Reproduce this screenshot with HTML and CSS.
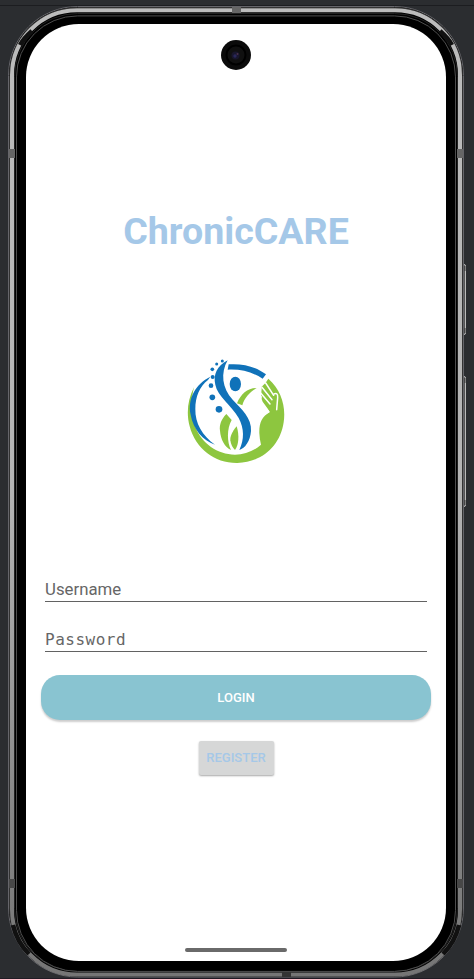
FILE: index.html
```html
<!DOCTYPE html>
<html lang="en">
<head>
<meta charset="utf-8">
<title>ChronicCARE</title>
<link rel="stylesheet" href="styles.css">
</head>
<body>
<div class="stage">
  <svg class="frame" viewBox="0 0 474 979" aria-hidden="true">
    <defs>
      <linearGradient id="metal" x1="0" y1="0" x2="0" y2="1">
        <stop offset="0" stop-color="#bcbcbc"/>
        <stop offset=".5" stop-color="#b4b4b4"/>
        <stop offset=".85" stop-color="#858585"/>
        <stop offset="1" stop-color="#757575"/>
      </linearGradient>
    </defs>
    <path d="M0 5.5H474" stroke="#1c1d20"/>
    <path d="M0 978.5H474" stroke="#201b24"/>
    <g fill="#555" stroke="#bbb">
      <rect x="461.5" y="264.5" width="4" height="70" rx="1.5"/>
      <rect x="461.5" y="376.5" width="4" height="130" rx="1.5"/>
      <path d="M464.5 266v5M464.5 328v5M464.5 378v5M464.5 500v5" stroke="#444" stroke-width="2"/>
    </g>
    <rect x="8.5" y="6.5" width="455" height="970.5" rx="69" fill="#000" stroke="#65656a"/>
    <rect x="9.5" y="7.5" width="453" height="968.5" rx="68" fill="none" stroke="#333"/>
    <rect x="12" y="10.2" width="448" height="964.3" rx="65" fill="none" stroke="url(#metal)" stroke-width="4"/>
    <rect x="14.5" y="13.5" width="443" height="958" rx="63" fill="none" stroke="#222"/>
    <rect x="16.5" y="15.9" width="439" height="955.5" rx="61" fill="none" stroke="#4d4d4d"/>
    <g fill="none" stroke="#111" stroke-width="4.5">
      <path d="M20 45Q24 38 32 31"/>
      <path d="M452 45Q448 38 440 31"/>
      <path d="M13 925Q17 942 29 954"/>
      <path d="M459 925Q455 942 443 954"/>
    </g>
    <g fill="#666">
      <rect x="232" y="7" width="9" height="6"/>
      <rect x="9" y="149" width="6" height="9"/>
      <rect x="457" y="149" width="6" height="9"/>
      <rect x="9" y="879" width="6" height="9" fill="#484848"/>
      <rect x="457" y="879" width="6" height="9" fill="#484848"/>
      <rect x="282" y="972" width="9" height="5" fill="#333"/>
    </g>
  </svg>
  <main class="screen">
    <svg class="camera" viewBox="0 0 30 30" aria-hidden="true">
      <circle cx="15" cy="15" r="15" fill="#0b0b0b"/>
      <circle cx="15" cy="15" r="9.5" fill="#101010" stroke="#000" stroke-width="2"/>
      <circle cx="14.5" cy="15.5" r="4" fill="#18162c"/>
      <circle cx="14" cy="16" r="1.7" fill="#29275a"/>
      <circle cx="16.5" cy="14" r="1" fill="#4b3048"/>
    </svg>
    <h1 class="title">ChronicCARE</h1>
    <svg class="logo" viewBox="0 0 336 348" role="img" aria-label="ChronicCARE logo">
      <g fill="#8dc63f">
        <path d="M42 106C22 145 19 186 29 223C47 292 105 334 172 333C247 331 301 281 311 211C318 163 304 115 265 80L257 92L245 104L243 130L268 180C246 194 237 213 238 244Q239 264 243 278C221 298 194 307 165 308C112 307 66 275 46 225C33 188 32 145 42 106Z"/>
        <path d="M230 108C203 108 182 126 171 154L187 160C193 138 209 120 230 108Z"/>
        <path d="M139 186C123 203 118 219 120 236C122 262 134 285 153 294C141 270 140 230 155 204Z"/>
        <path d="M170 223C156 240 150 254 151 265Q153 282 165 294C177 278 178 249 170 223Z"/>
      </g>
      <path d="M236 101L244 108L243 130L270 180L255 190L234 145Z" fill="#fff"/>
      <path d="M246 132Q243 141 248 149L271 181L290 172L272 159L254 137Q249 130 246 132Z" fill="#8dc63f"/>
      <g fill="none" stroke="#fff" stroke-width="4.5" stroke-linecap="round">
        <path d="M242 123L270 156"/>
        <path d="M246 106L276 143"/>
        <path d="M257 93L281 130"/>
        <path d="M282 126Q294 121 293 137L290 173"/>
      </g>
      <g fill="#1072b9">
        <path d="M91 74C47 96 22 139 32 188C40 233 68 264 105 278C67 251 45 214 46 171C46 134 59 103 84 84Z"/>
        <path d="M146 37C187 34 227 43 258 67L248 80C216 59 182 51 143 53Z"/>
        <ellipse cx="166" cy="96" rx="17" ry="22"/>
        <path d="M143 25C111 42 99 68 106 98C112 132 155 161 176 198C193 229 193 263 178 294C195 289 211 267 213 237C216 199 184 170 158 143C126 109 121 63 143 25Z"/>
        <circle cx="127" cy="27" r="4.5"/>
        <circle cx="110" cy="36" r="4.5"/>
        <circle cx="97" cy="52" r="5.5"/>
        <circle cx="98" cy="75" r="6"/>
        <circle cx="93" cy="101" r="7"/>
        <circle cx="97" cy="136" r="8.5"/>
        <circle cx="117" cy="172" r="10"/>
      </g>
    </svg>
    <form class="form">
      <div class="field">Username</div>
      <div class="field field-password">Password</div>
      <button class="login" type="button">LOGIN</button>
      <button class="register" type="button">REGISTER</button>
    </form>
    <div class="home-bar"></div>
  </main>
</div>
</body>
</html>
```

FILE: styles.css
```css
* { box-sizing: border-box; }

body {
  margin: 0;
  background: #2b2d30;
  font-family: Roboto, sans-serif;
}

.stage {
  position: relative;
  width: 474px;
  height: 979px;
  padding: 24px 28px 18px 26px;
  overflow: hidden;
}

.frame {
  position: absolute;
  inset: 0;
  width: 474px;
  height: 979px;
}

.screen {
  position: relative;
  display: flex;
  flex-direction: column;
  align-items: center;
  height: 937px;
  padding-top: 16px;
  background: #fff;
  border-radius: 53px;
}

.camera {
  width: 30px;
  height: 30px;
}

.title {
  margin: 138px 0 0;
  font-size: 37.6px;
  line-height: 46px;
  font-weight: 700;
  color: #a5c8e8;
}

.logo {
  width: 112px;
  height: 116px;
  margin-top: 98px;
}

.form {
  display: flex;
  flex-direction: column;
  align-items: center;
  width: 390px;
  margin-top: 108px;
}

.field {
  width: 382px;
  height: 26px;
  margin-bottom: 24px;
  border-bottom: 1px solid #626262;
  font-size: 16.8px;
  line-height: 27px;
  color: #666;
}

.field-password {
  margin-bottom: 23px;
  font-family: "DejaVu Sans Mono", monospace;
  font-size: 16px;
  line-height: 27px;
  letter-spacing: 0.5px;
}

button {
  padding: 0;
  border: 0;
  font: 500 13px/16px Roboto, sans-serif;
}

.login {
  width: 390px;
  height: 45px;
  border-radius: 19px;
  background: #89c4d1;
  color: #fff;
  box-shadow: 0 2px 2px rgba(0, 0, 0, .2);
}

.register {
  width: 75px;
  height: 34px;
  margin-top: 21px;
  border-radius: 2px;
  background: #d6d7d7;
  color: #a5c8e8;
  box-shadow: 0 1px 2px rgba(0, 0, 0, .35);
}

.home-bar {
  width: 102px;
  height: 4px;
  margin-top: auto;
  margin-bottom: 9px;
  border-radius: 2px;
  background: #6a6a6a;
}
```
